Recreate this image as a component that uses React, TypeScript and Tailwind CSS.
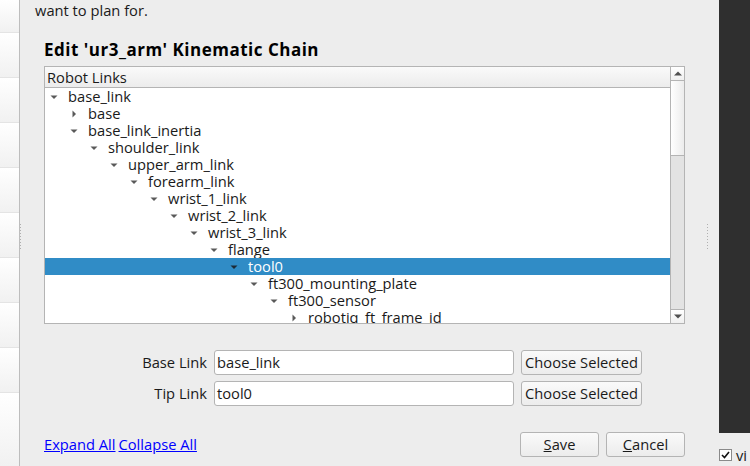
type Link = { name: string; level: number; open: boolean };

const links: Link[] = [
  { name: "base_link", level: 0, open: true },
  { name: "base", level: 1, open: false },
  { name: "base_link_inertia", level: 1, open: true },
  { name: "shoulder_link", level: 2, open: true },
  { name: "upper_arm_link", level: 3, open: true },
  { name: "forearm_link", level: 4, open: true },
  { name: "wrist_1_link", level: 5, open: true },
  { name: "wrist_2_link", level: 6, open: true },
  { name: "wrist_3_link", level: 7, open: true },
  { name: "flange", level: 8, open: true },
  { name: "tool0", level: 9, open: true },
  { name: "ft300_mounting_plate", level: 10, open: true },
  { name: "ft300_sensor", level: 11, open: true },
  { name: "robotiq_ft_frame_id", level: 12, open: false },
];

function Arrow({ open, dark }: { open: boolean; dark?: boolean }) {
  const fill = dark ? "#1c2a36" : "#5a5a5a";
  return (
    <svg width="8" height="8" viewBox="0 0 8 8" className="shrink-0">
      {open ? <path d="M0.5 2.5 L7.5 2.5 L4 6 Z" fill={fill} /> : <path d="M2.5 0.5 L6 4 L2.5 7.5 Z" fill={fill} />}
    </svg>
  );
}

function Grip() {
  return (
    <div className="flex flex-col gap-[2px]">
      {[0, 1, 2, 3, 4, 5, 6, 7, 8].map((i) => (
        <div key={i} className="w-px h-px bg-[#b0b0b0]" />
      ))}
    </div>
  );
}

function FormRow({ label, value }: { label: string; value: string }) {
  return (
    <div className="flex items-center h-[25px]">
      <div className="w-[164px] text-right pr-[1px]">{label}</div>
      <div className="ml-[6px] w-[300px] h-[25px] bg-white border border-[#b4b4b4] rounded-[3px] flex items-center pl-[2px]">
        {value}
      </div>
      <button className="ml-[7px] w-[121px] h-[25px] border border-[#b4b4b4] rounded-[3px] bg-gradient-to-b from-[#fafafa] to-[#ececec] flex items-center justify-center">
        Choose Selected
      </button>
    </div>
  );
}

export default function App() {
  return (
    <div className="w-[750px] h-[466px] flex bg-[#ededed] overflow-hidden text-[14.7px] text-[#1a1a1a] font-['Open_Sans',sans-serif]">
      <div className="w-[20px] shrink-0 border-r border-[#bdbdbd] flex flex-col">
        <div className="h-[33px] bg-gradient-to-b from-white to-[#f1f1f1] border-b border-[#e4e4e4]" />
        {[0, 1, 2, 3, 4, 5, 6, 7].map((i) => (
          <div key={i} className="h-[45px] bg-gradient-to-b from-white to-[#f1f1f1] border-b border-[#e4e4e4]" />
        ))}
        <div className="flex-1 bg-gradient-to-b from-white to-[#f1f1f1]" />
      </div>

      <div className="w-[4px] shrink-0 flex items-center pt-[6px]">
        <Grip />
      </div>

      <div className="flex-1 flex flex-col">
        <div className="h-[20px] leading-[20px] pl-[11px]">want to plan for.</div>

        <div className="pl-[20px] w-[661px]">
          <div className="mt-[20px] h-[20px] leading-[20px] font-bold text-[17px] text-black tracking-[0.5px]">
            Edit 'ur3_arm' Kinematic Chain
          </div>

          <div className="mt-[6px] h-[258px] border border-[#b4b4b4] bg-white flex">
            <div className="flex-1 flex flex-col overflow-hidden">
              <div className="h-[21px] shrink-0 border-b border-[#b4b4b4] bg-gradient-to-b from-[#fafafa] to-[#ececec] pl-[2px] leading-[20px]">
                Robot Links
              </div>
              {links.map((l) => {
                const sel = l.name === "tool0";
                return (
                  <div
                    key={l.name}
                    className={`h-[17px] shrink-0 flex items-center whitespace-nowrap ${sel ? "bg-[#308cc6] text-white" : ""}`}
                    style={{ paddingLeft: 5 + l.level * 20 }}
                  >
                    <Arrow open={l.open} dark={sel} />
                    <span className="ml-[10px] leading-[17px]">{l.name}</span>
                  </div>
                );
              })}
            </div>
            <div className="w-[14px] shrink-0 border-l border-[#b4b4b4] flex flex-col bg-[#e3e3e3]">
              <div className="h-[14px] border-b border-[#b4b4b4] bg-gradient-to-b from-white to-[#f0f0f0] flex items-center justify-center">
                <svg width="8" height="5" viewBox="0 0 8 5">
                  <path d="M0 4.5 L8 4.5 L4 0.5 Z" fill="#505050" />
                </svg>
              </div>
              <div className="h-[75px] border-b border-[#b4b4b4] bg-gradient-to-r from-white to-[#ececec]" />
              <div className="flex-1" />
              <div className="h-[14px] border-t border-[#b4b4b4] bg-gradient-to-b from-white to-[#f0f0f0] flex items-center justify-center">
                <svg width="8" height="5" viewBox="0 0 8 5">
                  <path d="M0 0.5 L8 0.5 L4 4.5 Z" fill="#505050" />
                </svg>
              </div>
            </div>
          </div>

          <div className="mt-[26px] flex flex-col gap-[6px]">
            <FormRow label="Base Link" value="base_link" />
            <FormRow label="Tip Link" value="tool0" />
          </div>

          <div className="mt-[26px] flex items-center h-[25px]">
            <a className="text-[#0000ff] underline">Expand All</a>
            <a className="ml-[3px] text-[#0000ff] underline">Collapse All</a>
            <div className="flex-1" />
            <button className="w-[79px] h-[25px] border border-[#b4b4b4] rounded-[3px] bg-gradient-to-b from-[#fafafa] to-[#ececec]">
              <span className="underline">S</span>ave
            </button>
            <button className="ml-[7px] w-[79px] h-[25px] border border-[#b4b4b4] rounded-[3px] bg-gradient-to-b from-[#fafafa] to-[#ececec]">
              <span className="underline">C</span>ancel
            </button>
          </div>
        </div>
      </div>

      <div className="w-[12px] shrink-0 flex items-center justify-start pt-[6px]">
        <Grip />
      </div>

      <div className="w-[31px] shrink-0 flex flex-col">
        <div className="h-[437px] bg-[#2f2f2f]" />
        <div className="flex items-center mt-[11px] whitespace-nowrap">
          <div className="w-[13px] h-[12px] border border-[#8a8a8a] bg-white flex items-center justify-center">
            <svg width="9" height="8" viewBox="0 0 9 8">
              <path d="M1 4 L3.5 6.5 L8 1" stroke="#111" strokeWidth="1.6" fill="none" />
            </svg>
          </div>
          <span className="ml-[4px]">vi</span>
        </div>
      </div>
    </div>
  );
}
